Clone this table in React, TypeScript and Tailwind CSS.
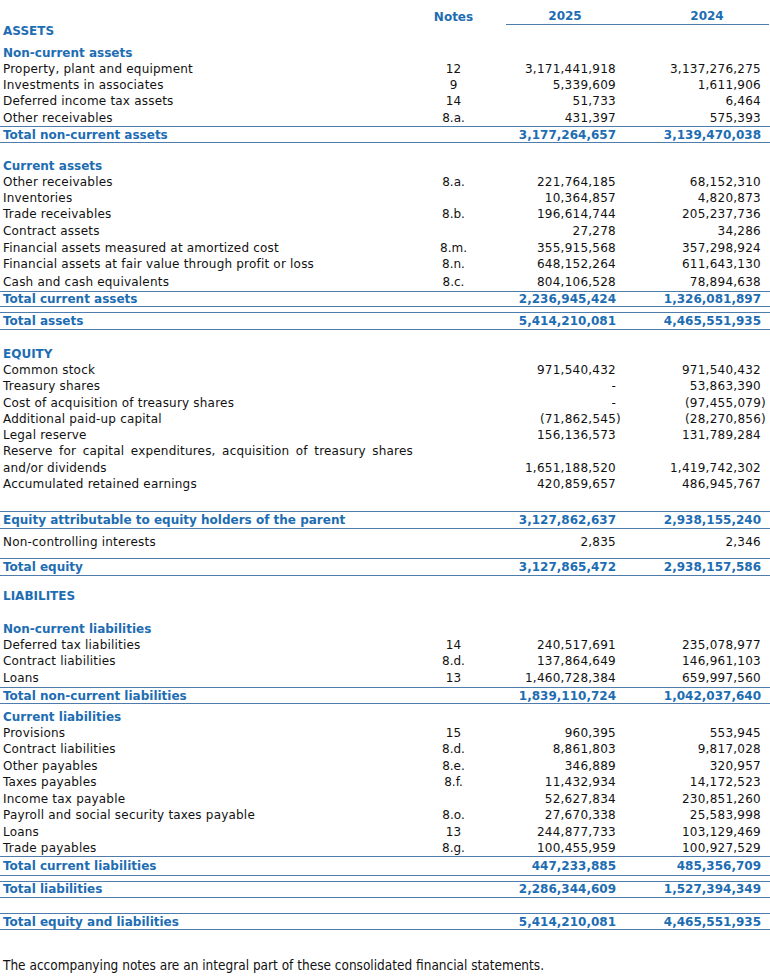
import React from 'react';

type Row =
  | { k: 'gap'; h: string }
  | { k: 'head'; label: string; h: string }
  | { k: 'item'; label: string; note?: string; a?: string; b?: string; h: string }
  | { k: 'wrap'; label: string; h: string }
  | { k: 'total'; label: string; a: string; b: string; h: string };

const rows: Row[] = [
  { k: 'head', label: 'ASSETS', h: 'h-[12px]' },
  { k: 'gap', h: 'h-[7px]' },
  { k: 'head', label: 'Non-current assets', h: 'h-[17px]' },
  { k: 'item', label: 'Property, plant and equipment', note: '12', a: '3,171,441,918', b: '3,137,276,275', h: 'h-[16px]' },
  { k: 'item', label: 'Investments in associates', note: '9', a: '5,339,609', b: '1,611,906', h: 'h-[16px]' },
  { k: 'item', label: 'Deferred income tax assets', note: '14', a: '51,733', b: '6,464', h: 'h-[16px]' },
  { k: 'item', label: 'Other receivables', note: '8.a.', a: '431,397', b: '575,393', h: 'h-[17px]' },
  { k: 'total', label: 'Total non-current assets', a: '3,177,264,657', b: '3,139,470,038', h: 'h-[17px]' },
  { k: 'gap', h: 'h-[15px]' },
  { k: 'head', label: 'Current assets', h: 'h-[16px]' },
  { k: 'item', label: 'Other receivables', note: '8.a.', a: '221,764,185', b: '68,152,310', h: 'h-[16px]' },
  { k: 'item', label: 'Inventories', a: '10,364,857', b: '4,820,873', h: 'h-[16px]' },
  { k: 'item', label: 'Trade receivables', note: '8.b.', a: '196,614,744', b: '205,237,736', h: 'h-[16px]' },
  { k: 'item', label: 'Contract assets', a: '27,278', b: '34,286', h: 'h-[17px]' },
  { k: 'item', label: 'Financial assets measured at amortized cost', note: '8.m.', a: '355,915,568', b: '357,298,924', h: 'h-[17px]' },
  { k: 'item', label: 'Financial assets at fair value through profit or loss', note: '8.n.', a: '648,152,264', b: '611,643,130', h: 'h-[16px]' },
  { k: 'item', label: 'Cash and cash equivalents', note: '8.c.', a: '804,106,528', b: '78,894,638', h: 'h-[19px]' },
  { k: 'total', label: 'Total current assets', a: '2,236,945,424', b: '1,326,081,897', h: 'h-[16px]' },
  { k: 'gap', h: 'h-[5px]' },
  { k: 'total', label: 'Total assets', a: '5,414,210,081', b: '4,465,551,935', h: 'h-[18px]' },
  { k: 'gap', h: 'h-[15px]' },
  { k: 'head', label: 'EQUITY', h: 'h-[17px]' },
  { k: 'item', label: 'Common stock', a: '971,540,432', b: '971,540,432', h: 'h-[16px]' },
  { k: 'item', label: 'Treasury shares', a: '-', b: '53,863,390', h: 'h-[16px]' },
  { k: 'item', label: 'Cost of acquisition of treasury shares', a: '-', b: '(97,455,079)', h: 'h-[17px]' },
  { k: 'item', label: 'Additional paid-up capital', a: '(71,862,545)', b: '(28,270,856)', h: 'h-[16px]' },
  { k: 'item', label: 'Legal reserve', a: '156,136,573', b: '131,789,284', h: 'h-[16px]' },
  { k: 'wrap', label: 'Reserve for capital expenditures, acquisition of treasury shares', h: 'h-[16px]' },
  { k: 'item', label: 'and/or dividends', a: '1,651,188,520', b: '1,419,742,302', h: 'h-[17px]' },
  { k: 'item', label: 'Accumulated retained earnings', a: '420,859,657', b: '486,945,767', h: 'h-[16px]' },
  { k: 'gap', h: 'h-[19px]' },
  { k: 'total', label: 'Equity attributable to equity holders of the parent', a: '3,127,862,637', b: '2,938,155,240', h: 'h-[18px]' },
  { k: 'gap', h: 'h-[5px]' },
  { k: 'item', label: 'Non-controlling interests', a: '2,835', b: '2,346', h: 'h-[16px]' },
  { k: 'gap', h: 'h-[8px]' },
  { k: 'total', label: 'Total equity', a: '3,127,865,472', b: '2,938,157,586', h: 'h-[18px]' },
  { k: 'gap', h: 'h-[12px]' },
  { k: 'head', label: 'LIABILITES', h: 'h-[16px]' },
  { k: 'gap', h: 'h-[16px]' },
  { k: 'head', label: 'Non-current liabilities', h: 'h-[17px]' },
  { k: 'item', label: 'Deferred tax liabilities', note: '14', a: '240,517,691', b: '235,078,977', h: 'h-[16px]' },
  { k: 'item', label: 'Contract liabilities', note: '8.d.', a: '137,864,649', b: '146,961,103', h: 'h-[16px]' },
  { k: 'item', label: 'Loans', note: '13', a: '1,460,728,384', b: '659,997,560', h: 'h-[18px]' },
  { k: 'total', label: 'Total non-current liabilities', a: '1,839,110,724', b: '1,042,037,640', h: 'h-[17px]' },
  { k: 'gap', h: 'h-[5px]' },
  { k: 'head', label: 'Current liabilities', h: 'h-[16px]' },
  { k: 'item', label: 'Provisions', note: '15', a: '960,395', b: '553,945', h: 'h-[16px]' },
  { k: 'item', label: 'Contract liabilities', note: '8.d.', a: '8,861,803', b: '9,817,028', h: 'h-[16px]' },
  { k: 'item', label: 'Other payables', note: '8.e.', a: '346,889', b: '320,957', h: 'h-[17px]' },
  { k: 'item', label: 'Taxes payables', note: '8.f.', a: '11,432,934', b: '14,172,523', h: 'h-[16px]' },
  { k: 'item', label: 'Income tax payable', a: '52,627,834', b: '230,851,260', h: 'h-[17px]' },
  { k: 'item', label: 'Payroll and social security taxes payable', note: '8.o.', a: '27,670,338', b: '25,583,998', h: 'h-[16px]' },
  { k: 'item', label: 'Loans', note: '13', a: '244,877,733', b: '103,129,469', h: 'h-[17px]' },
  { k: 'item', label: 'Trade payables', note: '8.g.', a: '100,455,959', b: '100,927,529', h: 'h-[16px]' },
  { k: 'total', label: 'Total current liabilities', a: '447,233,885', b: '485,356,709', h: 'h-[20px]' },
  { k: 'gap', h: 'h-[5px]' },
  { k: 'total', label: 'Total liabilities', a: '2,286,344,609', b: '1,527,394,349', h: 'h-[17px] pb-[2px]' },
  { k: 'gap', h: 'h-[15px]' },
  { k: 'total', label: 'Total equity and liabilities', a: '5,414,210,081', b: '4,465,551,935', h: 'h-[17px]' },
];

// accounting format: closing paren hangs past the column edge
function Amount({ v }: { v?: string }) {
  if (!v) return null;
  if (v.startsWith('(')) {
    return (
      <>
        {v.slice(0, -1)}
        <span className="-mr-[5px]">)</span>
      </>
    );
  }
  return <>{v}</>;
}

function Line({ row }: { row: Row }) {
  if (row.k === 'gap') return <div className={row.h} />;

  if (row.k === 'head') {
    return (
      <div className={`flex items-center pl-[3px] font-bold text-[#1d6db3] ${row.h}`}>
        {row.label}
      </div>
    );
  }

  if (row.k === 'wrap') {
    return (
      <div className={`flex items-center ${row.h}`}>
        <div className="w-[413px] pl-[3px] text-justify tracking-[0.2px] [text-align-last:justify]">
          {row.label}
        </div>
      </div>
    );
  }

  const total = row.k === 'total';
  const num = total ? 'tracking-normal' : 'tracking-[0.25px]';
  return (
    <div
      className={`flex items-center ${row.h} ${
        total ? 'border-y border-[#4f7cab] font-bold text-[#1d6db3]' : ''
      }`}
    >
      <div className={`w-[410px] pl-[3px] whitespace-nowrap ${total ? '' : 'tracking-[0.2px]'}`}>
        {row.label}
      </div>
      <div className="w-[87px] text-center">{row.k === 'item' ? row.note : ''}</div>
      <div className={`w-[119px] text-right ${num}`}>
        <Amount v={row.a} />
      </div>
      <div className={`w-[145px] text-right ${num}`}>
        <Amount v={row.b} />
      </div>
    </div>
  );
}

export default function App() {
  return (
    <div className="w-[770px] h-[976px] bg-white pt-[8px] font-['DejaVu_Sans',Verdana,sans-serif] text-[12px] leading-none text-[#111]">
      {/* column headings */}
      <div className="flex h-[17px] font-bold text-[#1d6db3]">
        <div className="w-[410px]" />
        <div className="flex w-[87px] items-center justify-center">Notes</div>
        <div className="ml-[9px] flex w-[263px] items-center border-b border-[#4f7cab]">
          <div className="w-[118px] text-center">2025</div>
          <div className="ml-[24px] w-[118px] text-center">2024</div>
        </div>
      </div>

      {rows.map((row, i) => (
        <Line key={i} row={row} />
      ))}

      <div className="h-[28px]" />
      <div className="flex h-[16px] items-center pl-[3px] font-['DejaVu_Sans_Condensed','DejaVu_Sans',sans-serif] text-[13.5px]">
        The accompanying notes are an integral part of these consolidated financial statements.
      </div>
    </div>
  );
}
